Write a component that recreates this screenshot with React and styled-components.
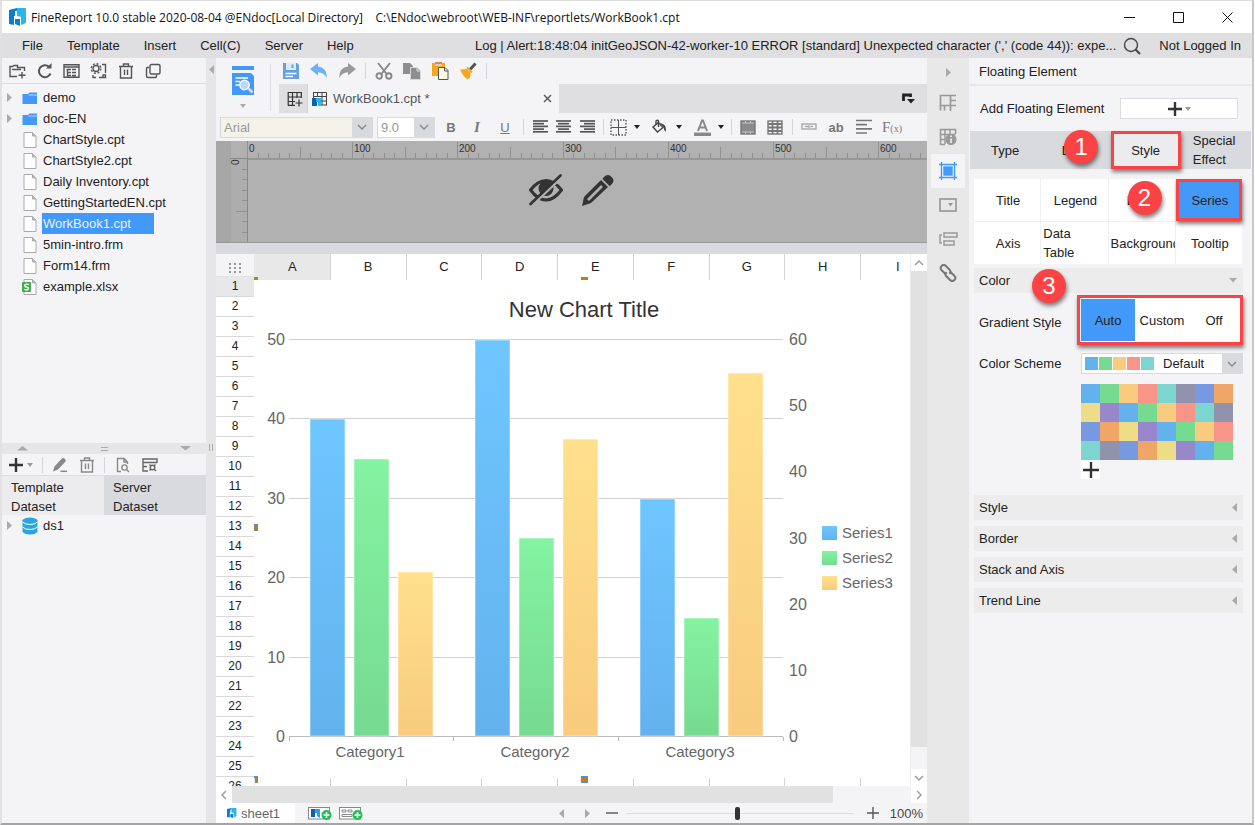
import { useState } from "react";
import styled, { createGlobalStyle, css } from "styled-components";

const GlobalStyle = createGlobalStyle`
  * {
    box-sizing: border-box;
  }
  body {
    margin: 0;
    background: #fff;
    color: #222;
    font-family: "Liberation Sans", Arial, sans-serif;
    font-size: 13px;
  }
  button, select, input {
    font: inherit;
    color: inherit;
    margin: 0;
    padding: 0;
    border: 0;
    background: none;
    border-radius: 0;
  }
  ul {
    list-style: none;
    margin: 0;
    padding: 0;
  }
`;

const Window = styled.div`
  display: flex;
  flex-direction: column;
  height: 100vh;
  min-height: 640px;
  margin-right: 1px;
  border: 1px solid #ddd;
  border-left: 2px solid #e2e2e4;
  border-right: 2px solid #c8c8c8;
  border-bottom: 2px solid #a5a5a5;
  background: #f4f4f7;
  overflow: hidden;
`;

const TitleBar = styled.header`
  display: flex;
  align-items: center;
  flex: none;
  height: 32px;
  padding-left: 7px;
  background: #fff;
  color: #111;
  font-family: "Open Sans", "Noto Sans", sans-serif;
  font-size: 12px;
  white-space: pre;
`;

const Title = styled.span`
  flex: 1;
  margin-left: 4px;
`;

const WindowButton = styled.button`
  display: flex;
  align-items: center;
  justify-content: center;
  width: 49px;
  height: 32px;
`;

const MenuBar = styled.nav`
  display: flex;
  align-items: center;
  flex: none;
  height: 25px;
  padding: 0 11px 0 8px;
  background: #dfdfe1;
  white-space: nowrap;
`;

const MenuItem = styled.button`
  padding: 0 12px;
`;

const LogText = styled.span`
  flex: 1;
  min-width: 0;
  overflow: hidden;
  text-align: right;
`;

const SearchButton = styled.button`
  display: flex;
  margin: 0 18px 0 7px;
`;

const Body = styled.div`
  display: flex;
  flex: 1;
  min-height: 0;
`;

const Sidebar = styled.aside`
  display: flex;
  flex-direction: column;
  flex: none;
  width: 204px;
`;

const SideToolbar = styled.div`
  display: flex;
  align-items: center;
  flex: none;
  height: ${(p) => p.$height}px;
  padding-left: 2px;
  border-bottom: 1px solid #dcdce0;
`;

const IconButton = styled.button`
  display: flex;
  align-items: center;
  justify-content: center;
  gap: ${(p) => p.$gap || 0}px;
  flex: none;
  width: ${(p) => p.$width || 28}px;
  height: 24px;
  color: ${(p) => p.$color || "#555"};
`;

const Separator = styled.span`
  flex: none;
  width: 1px;
  height: 16px;
  margin: 0 ${(p) => p.$space || 4}px;
  background: #d6d6da;
`;

const Tree = styled.ul`
  flex: ${(p) => (p.$grow ? 1 : "none")};
  padding-top: ${(p) => (p.$grow ? 3 : 0)}px;
  min-height: 0;
  overflow: hidden;
`;

const TreeRow = styled.li`
  display: flex;
  align-items: center;
  height: 21px;
  padding-left: 5px;
`;

const TreeArrow = styled.span`
  width: 15px;
  display: flex;
`;

const TreeLabel = styled.span`
  margin-left: 4px;
  padding: 0 23px 0 1px;
  line-height: 21px;
  ${(p) =>
    p.$selected &&
    css`
      background: #4299f9;
      color: #e8f3ff;
    `}
`;

const Splitter = styled.div`
  display: flex;
  align-items: center;
  justify-content: space-between;
  flex: none;
  height: 11px;
  padding: 0 15px;
  background: #e6e6e8;
`;

const DatasetTabs = styled.div`
  display: flex;
  flex: none;
  height: 39px;
`;

const DatasetTab = styled.button`
  flex: 1;
  padding: 2px 40px 0 9px;
  line-height: 19px;
  text-align: left;
  background: ${(p) => (p.$active ? "#ececee" : "#d9dadd")};
`;

const DatasetArea = styled.div`
  flex: none;
  height: 308px;
`;

const SideDivider = styled.div`
  display: flex;
  flex-direction: column;
  justify-content: space-between;
  align-items: center;
  flex: none;
  width: 10px;
  padding: 7px 0 372px;
  background: #e6e6e8;
`;

const Center = styled.main`
  display: flex;
  flex-direction: column;
  flex: 1;
  min-width: 0;
`;

const CenterTop = styled.div`
  display: flex;
  flex: none;
  height: 55px;
`;

const PreviewButton = styled.button`
  display: flex;
  flex-direction: column;
  align-items: center;
  gap: 8px;
  width: 54px;
  padding-top: 7px;
`;

const PreviewLine = styled.span`
  width: 1px;
  margin: 6px 6px 2px 0;
  background: #dcdce0;
`;

const TopColumn = styled.div`
  display: flex;
  flex-direction: column;
  flex: 1;
  min-width: 0;
`;

const Toolbar = styled.div`
  display: flex;
  align-items: center;
  height: 26px;
`;

const FileTabs = styled.div`
  display: flex;
  align-items: stretch;
  height: 29px;
  margin-left: 2px;
  background: #dfdfe1;
`;

const AddTab = styled.button`
  display: flex;
  align-items: center;
  justify-content: center;
  width: 29px;
  padding-left: 4px;
  border-right: 1px solid #d0d0d4;
`;

const FileTab = styled.div`
  display: flex;
  align-items: center;
  gap: 5px;
  width: 251px;
  padding: 0 5px 0 4px;
  background: #f4f4f7;
  color: #555;
  span {
    flex: 1;
  }
`;

const TabMenu = styled.button`
  display: flex;
  align-items: center;
  margin-left: auto;
  margin-right: 12px;
`;

const FormatBar = styled.div`
  display: flex;
  align-items: center;
  flex: none;
  height: 28px;
  padding-left: 4px;
  color: #777;
`;

const Combo = styled.div`
  display: flex;
  width: ${(p) => p.$width}px;
  height: 21px;
  margin-right: 4px;
  border: 1px solid #d9dadd;
  background: ${(p) => p.$bg || "#fff"};
  select {
    appearance: none;
    flex: 1;
    min-width: 0;
    padding-left: 3px;
    color: #999;
    opacity: 1;
  }
`;

const ComboArrow = styled.span`
  display: flex;
  align-items: center;
  justify-content: center;
  width: 20px;
  background: #d9dadd;
  color: #888;
`;

const Glyph = styled.span`
  font-weight: ${(p) => (p.$bold ? 700 : 400)};
  font-style: ${(p) => (p.$italic ? "italic" : "normal")};
  font-family: ${(p) => (p.$serif ? '"Liberation Serif", serif' : "inherit")};
  font-size: ${(p) => (p.$serif ? 15 : 13)}px;
  text-decoration: ${(p) => (p.$underline ? "underline" : "none")};
  small {
    font-size: 10px;
  }
`;

const ParamPane = styled.section`
  position: relative;
  flex: none;
  height: 102px;
  background: #b1b1b1;
  border-bottom: 1px solid #999;
  overflow: hidden;
  & > svg {
    display: block;
  }
`;

const ParamActions = styled.div`
  position: absolute;
  inset: 33px 0 auto 0;
  display: flex;
  justify-content: center;
  gap: 18px;
  button {
    display: flex;
  }
`;

const Sheet = styled.section`
  display: flex;
  flex: 1;
  min-height: 0;
  margin-top: 11px;
  background: #fff;
  box-shadow: 0 -11px 0 #d9dadd;
`;

const RowHeads = styled.div`
  flex: none;
  width: 38px;
  overflow: hidden;
`;

const Corner = styled.div`
  display: flex;
  align-items: center;
  justify-content: center;
  height: 23px;
  padding-top: 6px;
  background: #f4f4f7;
  border-bottom: 1px solid #e4e4e6;
`;

const RowHead = styled.div`
  height: 20px;
  line-height: 19px;
  text-align: center;
  font-size: 12px;
  border-bottom: 1px solid #d9d9dc;
  background: ${(p) => (p.$active ? "#e8e8e8" : "#fff")};
`;

const Canvas = styled.div`
  display: flex;
  flex-direction: column;
  flex: 1;
  min-width: 0;
`;

const ColumnRow = styled.div`
  display: grid;
  grid-template-columns: repeat(8, 1fr) 50px;
  flex: none;
  height: ${(p) => (p.$ticks ? 8 : 23)}px;
  line-height: 26px;
  text-align: center;
`;

const ColumnCell = styled.div`
  border-left: 1px solid #d4d4d8;
  background: ${(p) => (p.$active ? "#e8e8e8" : "none")};
  &:first-child {
    border-left-color: #e8e8e8;
  }
  &:last-child {
    text-align: left;
    padding-left: 35px;
  }
`;

const ChartSvg = styled.svg`
  display: block;
  flex: 1;
  width: 100%;
  min-height: 0;
  overflow: visible;
  text {
    font-family: "Liberation Sans", Arial, sans-serif;
    fill: #666;
  }
`;

const VScroll = styled.div`
  display: flex;
  flex-direction: column;
  flex: none;
  width: 17px;
  background: #f4f4f7;
  border-left: 1px solid #ededf0;
`;

const HScroll = styled.div`
  display: flex;
  flex: none;
  height: 17px;
`;

const ScrollThumb = styled.div`
  flex: ${(p) => p.$share};
  background: #e1e1e1;
`;

const ScrollSpace = styled.div`
  flex: ${(p) => p.$share};
`;

const ScrollButton = styled.button`
  display: flex;
  align-items: center;
  justify-content: center;
  flex: none;
  min-width: 16px;
  height: 17px;
  background: #fff;
  color: #999;
`;

const BottomBar = styled.footer`
  display: flex;
  align-items: center;
  flex: none;
  height: 20px;
  padding-right: 4px;
`;

const SheetTab = styled.button`
  display: flex;
  align-items: center;
  gap: 4px;
  width: 79px;
  height: 20px;
  margin-right: 9px;
  padding-left: 11px;
  background: #fff;
  color: #666;
`;

const SheetNav = styled.div`
  display: flex;
  margin-left: auto;
`;

const Zoom = styled.input`
  appearance: none;
  width: 226px;
  height: 14px;
  margin: 0 12px 0 4px;
  background: linear-gradient(#dcdce0, #dcdce0) center / 100% 1px no-repeat;
  &::-webkit-slider-thumb {
    appearance: none;
    width: 5px;
    height: 13px;
    border-radius: 2px;
    background: #333;
  }
`;

const Percent = styled.span`
  margin-left: 9px;
  color: #444;
`;

const Strip = styled.div`
  flex: none;
  width: 42px;
  padding: 0 4px;
  background: #e8e8e8;
`;

const StripButton = styled.button`
  display: flex;
  align-items: center;
  justify-content: center;
  width: 34px;
  height: ${(p) => p.$height || 34}px;
  color: ${(p) => (p.$active ? "#4299f9" : "#999")};
  background: ${(p) => (p.$active ? "#f4f4f7" : "none")};
`;

const Panel = styled.aside`
  flex: none;
  width: 283px;
`;

const PanelTitle = styled.div`
  height: 28px;
  padding-left: 10px;
  line-height: 27px;
  border-bottom: 2px solid #e8e8ea;
`;

const AddRow = styled.div`
  display: flex;
  align-items: center;
  justify-content: space-between;
  height: 45px;
  padding: 0 14px 0 11px;
`;

const AddButton = styled.button`
  display: flex;
  align-items: center;
  justify-content: center;
  gap: 3px;
  width: 118px;
  height: 21px;
  background: #fff;
  border: 1px solid #dcdce0;
`;

const framed = css`
  border: 3px solid #fb4345;
  box-shadow: 1px 3px 4px rgba(0, 0, 0, 0.5);
  z-index: 1;
`;

const PanelTabs = styled.div`
  display: grid;
  grid-template-columns: repeat(4, 1fr);
  height: 38px;
  margin: 0 1px;
  background: #d9dadd;
`;

const PanelTab = styled.button`
  position: relative;
  line-height: 19px;
  background: ${(p) => (p.$framed ? "#ececee" : "none")};
  text-align: ${(p) => (p.$wrap ? "left" : "center")};
  padding: ${(p) => (p.$wrap ? "0 12px" : "0")};
  ${(p) => p.$framed && framed}
`;

const StyleGrid = styled.div`
  display: grid;
  grid-template-columns: repeat(4, 1fr);
  grid-auto-rows: 42px;
  gap: 1px;
  margin: 10px 10px 4px 5px;
  background: #f0f0f3;
`;

const StyleCell = styled.button`
  position: relative;
  overflow: ${(p) => (p.$clip ? "hidden" : "visible")};
  padding: 0 ${(p) => (p.$wrap ? 20 : 0)}px 0 2px;
  line-height: 19px;
  white-space: ${(p) => (p.$clip ? "nowrap" : "normal")};
  text-align: ${(p) => (p.$clip || p.$wrap ? "left" : "center")};
  background: ${(p) => (p.$framed ? "#4299f9" : "#fff")};
  ${(p) => p.$framed && framed}
`;

const Section = styled.button`
  position: relative;
  display: flex;
  align-items: center;
  justify-content: space-between;
  width: 269px;
  height: 25px;
  margin: 0 0 6px 5px;
  padding: 0 6px 0 5px;
  background: #ececec;
`;

const Field = styled.div`
  display: grid;
  grid-template-columns: ${(p) => p.$label || 102}px 1fr;
  align-items: center;
  margin: 0 9px ${(p) => p.$space || 0}px 10px;
`;

const Segments = styled.div`
  position: relative;
  display: grid;
  grid-template-columns: 54px 54px 1fr;
  height: 50px;
  margin-top: -4px;
  padding: 1px;
  background: #fff;
  ${framed}
`;

const Segment = styled.button`
  background: ${(p) => (p.$active ? "#4299f9" : "#fff")};
`;

const SchemeBox = styled.div`
  display: flex;
  align-items: center;
  height: 21px;
  padding-left: 3px;
  background: #fff;
  border: 1px solid #d9dadd;
  select {
    appearance: none;
    flex: 1;
    min-width: 0;
    padding-left: 8px;
  }
  ${ComboArrow} {
    align-self: stretch;
  }
`;

const SmallSwatch = styled.span`
  width: 13px;
  height: 13px;
  margin-right: 1px;
  background: ${(p) => p.$color};
`;

const Palette = styled.div`
  display: grid;
  grid-template-columns: repeat(8, 19px);
  grid-auto-rows: 19px;
`;

const Swatch = styled.button`
  background: ${(p) => p.$color};
`;

const AddColor = styled.button`
  display: flex;
  align-items: center;
  justify-content: center;
  background: #fff;
`;

const Badge = styled.span`
  position: absolute;
  left: ${(p) => p.$left}px;
  top: ${(p) => p.$top}px;
  z-index: 2;
  width: 34px;
  height: 34px;
  border-radius: 50%;
  background: #fb4345;
  box-shadow: 1px 3px 4px rgba(0, 0, 0, 0.5);
  color: #fff;
  font-size: 24px;
  line-height: 34px;
  text-align: center;
`;

/* ---------- icons ---------- */

const Icon = ({ size = 18, w = size, h = size, children, ...rest }) => (
  <svg width={w} height={h} viewBox={`0 0 ${w} ${h}`} fill="none" stroke="currentColor" strokeWidth="1.4" aria-hidden="true" {...rest}>
    {children}
  </svg>
);

const trianglePaths = {
  right: ["M0 0L5 4.5L0 9Z", 5, 9],
  left: ["M5 0L0 4.5L5 9Z", 5, 9],
  down: ["M0 0H8L4 4.5Z", 8, 5],
  up: ["M0 4.5H8L4 0Z", 8, 5],
};

const Triangle = ({ dir, color = "#aaa", wide }) => {
  const [d, w, h] = trianglePaths[dir];
  return (
    <svg width={wide ? 11 : w} height={h} viewBox={`0 0 ${w} ${h}`} preserveAspectRatio="none" aria-hidden="true">
      <path d={d} fill={color} />
    </svg>
  );
};

const Caret = ({ color = "#222" }) => (
  <svg width="6" height="4" aria-hidden="true"><path d="M0 0H6L3 4Z" fill={color} /></svg>
);

const chevrons = { down: "M2 4L6 8L10 4", up: "M2 8L6 4L10 8", left: "M8 2L4 6L8 10", right: "M4 2L8 6L4 10" };
const Chevron = ({ dir }) => <Icon size={12}><path d={chevrons[dir]} /></Icon>;

const Logo = ({ size = 18 }) => (
  <svg width={size} height={size} viewBox="0 0 18 18" aria-hidden="true">
    <path d="M0 2L8 0V8L11 9V18L6 16V11H5V17L0 16Z" fill="#0c7bd0" />
    <path d="M8 0H16Q17 0 17 1V15L12 17V9L7 8Z" fill="#2bb5e8" />
    <path d="M6 3H8V8L12 9V11H5V8H6Z" fill="#fff" />
  </svg>
);

const Plus = ({ size = 14 }) => (
  <Icon size={size} strokeWidth="2.4" color="#333"><path d={`M${size / 2} 0V${size}M0 ${size / 2}H${size}`} /></Icon>
);

const TrashIcon = () => (
  <Icon size={16}><path d="M1 3.5H15M5.5 3V1H10.500V3M2.500 3.500V15H13.500V3.500M6.500 6.500V12M9.500 6.500V12" /></Icon>
);

const FolderPlus = () => (
  <Icon w={17} h={16}><path d="M15.500 8V4.500H8.500V2.500H5L3.500 3.500H1V13.500H8M3 6.500H12M13 9V15.500M9.500 12.300H16.500" /></Icon>
);

const Refresh = () => (
  <Icon size={16} strokeWidth="2"><path d="M13.500 10.500A6 6 0 1 1 12 3.700" /><path d="M9 5.500H14.500V0Z" fill="currentColor" stroke="none" /></Icon>
);

const PanelTree = () => (
  <Icon w={17} h={16}><path d="M1 1.700H16V14.300H1ZM1 4H16M3.500 6.500H8M4.500 6.500V12.500H8M4.500 9.500H8M9 6.500H13M9 9.500H13M9 12.500H13" /></Icon>
);

const GearFrame = () => (
  <Icon w={17} h={16}>
    <circle cx="6" cy="5.500" r="3" /><circle cx="6" cy="5.500" r="4.800" strokeDasharray="2 1.770" />
    <path d="M12 1.500H15.500V10M13 14.500H9M3 12V14.500H6M15.500 12V14.500H13V12Z" />
  </Icon>
);

const CopyOutline = () => (
  <Icon size={16}><rect x="5" y="1.500" width="10" height="9.500" rx="1.500" /><path d="M4 4.500H2.500Q1.500 4.500 1.500 5.500V13Q1.500 14.500 3 14.500H10.500Q11.500 14.500 11.500 13V12" /></Icon>
);

const FolderIcon = () => (
  <svg width="16" height="14" aria-hidden="true">
    <path d="M0.500 3H6L7.500 1.500H15V13H0.500Z" fill="#4299f9" /><path d="M6.500 4H15" stroke="#b8dbff" />
  </svg>
);

const FileIcon = ({ excel }) => (
  <svg width="16" height="18" aria-hidden="true">
    <path d="M2 1.500H10.500L14 5V16.500H2Z" fill="#fff" stroke="#aaa" /><path d="M10.500 1.500V5H14" fill="#bbb" stroke="#aaa" />
    {excel && (
      <>
        <rect x="0" y="4" width="9" height="10" rx="1" fill="#3aaf4a" />
        <path d="M6.700 7Q6 6 4.500 6.200Q2.500 6.500 2.800 8Q3 9 4.700 9Q6.600 9.300 6.500 10.500Q6 12 4.500 12Q3 12 2.300 11" fill="none" stroke="#fff" strokeWidth="1.300" />
      </>
    )}
  </svg>
);

const Database = () => (
  <svg width="16" height="18" aria-hidden="true">
    <path d="M0.500 3.500V14.500Q2 17.500 8 17.500T15.500 14.500V3.500Z" fill="#2ba5e0" />
    <ellipse cx="8" cy="3.500" rx="7.500" ry="3" fill="#2ba5e0" />
    <path d="M0.500 5Q3 7.500 8 7.500T15.500 5M0.500 10Q3 12.500 8 12.500T15.500 10" stroke="#fff" fill="none" />
  </svg>
);

const PencilSmall = () => (
  <svg width="16" height="16" aria-hidden="true">
    <path d="M1 14.500L2.500 9.500L9.500 2Q11 0.500 12.500 1.500T13.500 4.500L6 12.500Z" fill="#888" /><path d="M8.500 14.300H15" stroke="#888" strokeWidth="1.500" />
  </svg>
);

const DocSearch = () => (
  <Icon size={16}><path d="M6 14.500H2.500V1.500H9L12.500 5V7M9 1.500V5H12.500" /><circle cx="9.500" cy="10.500" r="2.600" /><path d="M11.500 12.500L14 15" /></Icon>
);

const TableGear = () => (
  <Icon size={16}><path d="M15 6V2H1V14H6M1 5.500H15M1 9.500H5" /><circle cx="10.500" cy="10.500" r="2.300" /><path d="M7.500 7.500L9 9M12 12L14 14M13.500 7.500L12 9M7.500 13.500L9 12" /></Icon>
);

const PreviewIcon = () => (
  <svg width="24" height="31" aria-hidden="true">
    <path d="M1 1H23V5H1Z" fill="#4299f9" /><path d="M1 8H20L23 11V30H1Z" fill="#4299f9" />
    <path d="M4.500 13H17M4.500 16.500H9M4.500 20H8" stroke="#fff" strokeWidth="1.500" />
    <circle cx="13.500" cy="20" r="4.700" fill="#b8d9fb" stroke="#fff" strokeWidth="1.500" /><path d="M17.500 23.500L21.500 27.500" stroke="#ddd" strokeWidth="2.500" />
  </svg>
);

const SaveIcon = () => (
  <svg width="18" height="18" aria-hidden="true">
    <path d="M1 1H15L17 3V17H1Z" fill="#65a1dd" /><path d="M4 1H14V8H4Z" fill="#dcebf9" /><path d="M9.500 2.500H11.500V6H9.500Z" fill="#65a1dd" />
    <path d="M3.500 11.500H14.500M3.500 14.500H11" stroke="#fff" strokeWidth="1.300" />
  </svg>
);

const UndoIcon = ({ flip, color }) => (
  <svg width="18" height="16" viewBox="0 0 18 16" aria-hidden="true">
    <path d="M0 6L8 0V3.500Q16.500 4 17 15Q14 9.500 8 9.200V12.500Z" fill={color} transform={flip ? "translate(18 0) scale(-1 1)" : undefined} />
  </svg>
);

const CutIcon = () => (
  <Icon size={18} strokeWidth="1.900" color="#888"><path d="M3 1L12 12.500M15 1L6 12.500" /><circle cx="4.200" cy="14" r="2.700" /><circle cx="13.800" cy="14" r="2.700" /></Icon>
);

const CopyIcon = () => (
  <svg width="18" height="18" aria-hidden="true"><path d="M0 1H7L10 4V12H0Z" fill="#8e8e8e" /><path d="M7.500 5.500H14L17.500 9V17.500H7.500Z" fill="#8e8e8e" stroke="#d8d8d8" /><path d="M14 5.500V9H17.500" stroke="#ddd" fill="none" /></svg>
);

const PasteIcon = () => (
  <svg width="18" height="18" aria-hidden="true"><path d="M1 1H14V14H1Z" fill="#f5a81d" /><path d="M4 0H11V3H4Z" fill="#d98a5a" /><path d="M4 3H11" stroke="#fff" /><path d="M7.500 5.500H14L17 8.500V17.500H7.500Z" fill="#fff8e2" stroke="#555" /><path d="M13.500 5.500V9H17" stroke="#555" fill="none" /></svg>
);

const BrushIcon = () => (
  <svg width="18" height="18" aria-hidden="true"><path d="M16.500 1.500L11 7.500" stroke="#555" strokeWidth="3" /><path d="M1 7.500L8 7L11.500 10.500Q12 16 8.500 17.500Q4.500 15 1 7.500Z" fill="#f5a81d" /><path d="M8 5.500L13 10.500" stroke="#f5a81d" strokeWidth="2" /></svg>
);

const GridAdd = () => (
  <Icon size={16} color="#333"><path d="M1 1.500H14.500M1 6H14.500M1 10.500H8M1.200 1V14.500M5.500 1V14.500M10 1V7M14.300 1V7M1 14.300H8M12 8.500V15.500M8.500 12H15.500" strokeWidth="1.200" /></Icon>
);

const CptIcon = () => (
  <svg width="16" height="16" aria-hidden="true">
    <path d="M1 1.500H14.500V14.500M1.500 1V7M5.500 1V6M10 1V14M1 5.500H14.500M9 10H14.500M9 14H14.500" stroke="#444" fill="none" />
    <path d="M0 7H4V11H5V15H0Z" fill="#0b62ad" /><path d="M4 7H9V15H6V11H4Z" fill="#2bb5e8" />
  </svg>
);

const AlignIcon = ({ kind = "left" }) => {
  const starts = { left: [1, 1], center: [1, 3], right: [1, 5] }[kind];
  return (
    <Icon w={17} h={14} color="#555" strokeWidth="1.700">
      {[1, 3.7, 6.4, 9.1, 11.8].map((y, i) => (
        <path key={y} d={`M${starts[i % 2]} ${y}h${i % 2 ? 11 : 15}`} />
      ))}
    </Icon>
  );
};

const BorderIcon = () => (
  <Icon w={17} h={17} color="#555"><rect x="1" y="1" width="15" height="15" strokeDasharray="1.500 1.500" /><path d="M8.500 1V16M1 8.500H16" strokeWidth="1" /></Icon>
);

const BucketIcon = () => (
  <Icon w={17} h={16} color="#444"><path d="M2 8L7.500 3.500L12 8.500L6.500 13Z" /><path d="M5 6V2Q6.500 0.500 7.500 2V8" /><path d="M9 4Q16 5 15 13Q12.500 11 12.500 8" fill="currentColor" stroke="none" /></Icon>
);

const FontColorIcon = () => (
  <Icon w={17} h={17} color="#888"><path d="M4 12L8 1.500H9L13 12M5.500 8.500H11.500" strokeWidth="2" /><path d="M0 15.300H17" strokeWidth="3.500" /></Icon>
);

const MergeIcon = ({ split }) => (
  <Icon w={16} h={15} color="#777"><rect x="1" y="1" width="14" height="13" fill={split ? "none" : "#8a8a8a"} />{split ? <path d="M1 4H15M1 7.500H15M1 11H15M5.500 1V14M10.500 1V14" strokeWidth="1.800" /> : <path d="M2 3H14M2 12H14M5.500 1V3M10.500 1V3M5.500 12V14M10.500 12V14" stroke="#c4c4c4" strokeWidth="1" />}</Icon>
);

const BoxText = () => (
  <Icon w={16} h={8} color="#aaa"><rect x="1" y="1" width="14" height="5" /><path d="M4 3.500H7M8 2V5M9.500 3.500H12" /></Icon>
);

const LinesIcon = () => (
  <Icon w={18} h={16} color="#777" strokeWidth="1.700"><path d="M1 1.500H17M1 5.700H12M1 9.900H17M1 14H12" /></Icon>
);

const CellAttr = () => (
  <Icon size={18} strokeWidth="1.700"><path d="M1.500 16.500V1.500H17M11.500 1.500V11.500M1.500 11.500H17M5.500 11.500V16.500M11.500 11.500V17M11.500 6.500H17" /></Icon>
);

const CellInfo = () => (
  <Icon size={18} strokeWidth="1.500">
    <path d="M1.500 17V1.500H16.500V6M6 1.500V16M11 1.500V6M1.500 6.500H16.500M1.500 11.500H6M1.500 16.500H6" />
    <circle cx="12" cy="11.500" r="5.500" fill="currentColor" stroke="none" /><path d="M12 7.500V9M12 10.500V15" stroke="#e8e8e8" strokeWidth="1.800" />
  </Icon>
);

const FloatIcon = () => (
  <Icon size={18}><path d="M2.500 0V18M15.500 0V18M0 2.500H18M0 15.500H18" /><rect x="5" y="5" width="8" height="8" fill="currentColor" /></Icon>
);

const WidgetIcon = () => (
  <Icon w={18} h={14} strokeWidth="1.700"><rect x="1" y="1" width="16" height="12" /><path d="M9 5H14L11.500 8.500Z" fill="currentColor" stroke="none" /></Icon>
);

const ConditionIcon = () => (
  <Icon w={19} h={14} strokeWidth="1.500"><rect x="5" y="1" width="13" height="4" /><rect x="5" y="9" width="10" height="4" /><path d="M3 3H1V11H3" /></Icon>
);

const LinkIcon = () => (
  <Icon size={18} strokeWidth="2" color="#777">
    <g transform="rotate(45 9 9)">
      <path d="M8 11.500H2.500Q-0.500 11.500 -0.500 8.500T2.500 5.500H7.500Q10.500 5.500 10.500 8.500" />
      <path d="M10 6.500H15.500Q18.500 6.500 18.500 9.500T15.500 12.500H10.500Q7.500 12.500 7.500 9.500" />
    </g>
  </Icon>
);

const EyeOff = () => (
  <svg width="34" height="32" viewBox="0 0 34 32" aria-hidden="true">
    <path d="M1.500 16Q9 6.500 17 6.500T32.500 16Q25 26 17 26T1.500 16Z" fill="none" stroke="#333" strokeWidth="3" />
    <circle cx="17" cy="14.500" r="7.500" fill="#333" /><path d="M3 31L34 2" stroke="#b1b1b1" strokeWidth="3" /><path d="M1.500 30L31.500 1.500" stroke="#333" strokeWidth="2.600" strokeLinecap="round" />
  </svg>
);

const PencilLarge = () => (
  <svg width="34" height="33" viewBox="0 0 34 33" aria-hidden="true">
    <path d="M1 32L3 23L20 6L27 13L10 29Z" fill="#333" /><path d="M22 4Q26 -1 30 2.500Q35 6 30 11L28.500 12L21.500 5Z" fill="#333" /><path d="M7 26L21 12" stroke="#b1b1b1" strokeWidth="2.600" />
  </svg>
);

const AddSheetIcon = ({ form }) => (
  <svg width="24" height="15" aria-hidden="true">
    <rect x="0.500" y="1.500" width="21" height="11.500" fill="#fff" stroke="#888" />
    {form ? <path d="M3 4H7V6H3ZM9 4H13V6H9ZM3 8.500H13V10.500H3Z" fill="none" stroke="#888" /> : <><path d="M3 3H7V11H3Z" fill="#0b62ad" /><path d="M7 3H12V12L9 10V7H7Z" fill="#2b9fe0" /></>}
    <circle cx="18.500" cy="9" r="5" fill="#20bf55" /><path d="M18.500 6V12M15.500 9H21.500" stroke="#fff" strokeWidth="1.500" />
  </svg>
);

/* ---------- data ---------- */

const menus = ["File", "Template", "Insert", "Cell(C)", "Server", "Help"];

const files = [
  { name: "demo", folder: true },
  { name: "doc-EN", folder: true },
  { name: "ChartStyle.cpt" },
  { name: "ChartStyle2.cpt" },
  { name: "Daily Inventory.cpt" },
  { name: "GettingStartedEN.cpt" },
  { name: "WorkBook1.cpt" },
  { name: "5min-intro.frm" },
  { name: "Form14.frm" },
  { name: "example.xlsx", excel: true },
];

const columns = ["A", "B", "C", "D", "E", "F", "G", "H", "I"];
const rows = Array.from({ length: 26 }, (_, i) => i + 1);

const series = [
  { name: "Series1", top: "#6fc6ff", bottom: "#63b2ee", values: [40, 50, 30], max: 50 },
  { name: "Series2", top: "#84f3a2", bottom: "#76da91", values: [35, 25, 15], max: 50 },
  { name: "Series3", top: "#ffe08c", bottom: "#f8cb7f", values: [25, 45, 55], max: 60 },
];

// x, y, width, height of the resize handles, cut where they meet the headers
const handles = [
  [0, 0, 4, 3],
  [327, 0, 7, 3],
  [0, 247, 4, 7],
  [0, 499, 4, 7],
  [327, 499, 7, 7],
];

const schemeColors = ["#63b2ee", "#76da91", "#f8cb7f", "#f89588", "#7cd6cf", "#9192ab", "#7898e1", "#efa666", "#eddd86", "#9987ce"];
const swatches = Array.from({ length: 32 }, (_, i) => schemeColors[i % schemeColors.length]);

/* ---------- parts ---------- */

function Ruler() {
  const ticks = Array.from({ length: 140 }, (_, i) => i);
  const step = 10.52;
  return (
    <svg width="100%" height="102" aria-hidden="true">
      <rect width="15" height="102" fill="#a7a7a7" />
      <rect x="15" y="18" width="16" height="84" fill="#adadad" />
      <path d="M31.500 0V102M14 17.500H31" stroke="#888" fill="none" />
      <rect x="32" y="17" width="100%" height="2" fill="#979797" />
      {ticks.map((i) => {
        const x = Math.round(31 + i * step) + 0.5;
        const top = i % 10 === 0 ? 1 : i % 5 === 0 ? 6 : 12;
        return <path key={i} d={`M${x} ${top}V17`} stroke="#929292" />;
      })}
      {ticks.filter((i) => i % 10 === 0).map((i) => (
        <text key={i} x={Math.round(33 + i * step)} y="11" fontSize="10" fill="#333" fontFamily="Liberation Sans, sans-serif">
          {i * 10}
        </text>
      ))}
      {[1, 2, 3, 4, 5, 6, 7].map((i) => (
        <path key={i} d={`M${i === 5 ? 20 : 26} ${Math.round(17 + i * step) + 0.5}H31`} stroke="#929292" />
      ))}
      <text x="0" y="0" transform="translate(23 24) rotate(-90)" fontSize="10" fill="#333" fontFamily="Liberation Sans, sans-serif">0</text>
    </svg>
  );
}

function Chart() {
  const base = 460;
  const height = 397;
  const left = [50, 40, 30, 20, 10, 0];
  const right = [60, 50, 40, 30, 20, 10, 0];
  return (
    <ChartSvg role="img" aria-label="New Chart Title">
      <defs>
        {series.map((s) => (
          <linearGradient key={s.name} id={s.name} x2="0" y2="1">
            <stop offset="0" stopColor={s.top} />
            <stop offset="1" stopColor={s.bottom} />
          </linearGradient>
        ))}
      </defs>
      <text x="330" y="40" fontSize="22" textAnchor="middle" style={{ fill: "#333" }}>New Chart Title</text>
      {left.map((v) => {
        const y = Math.round(base - (v / 50) * height);
        return (
          <g key={v}>
            <path d={`M35 ${y - 0.5}H529`} stroke={v ? "#d0d0d0" : "#bbb"} />
            <text x="31" y={y + 5} fontSize="16" textAnchor="end">{v}</text>
          </g>
        );
      })}
      {right.map((v) => (
        <text key={v} x="535" y={Math.round(base - (v / 60) * height) + 5} fontSize="16">{v}</text>
      ))}
      {[35, 199, 364, 529].map((x) => (
        <path key={x} d={`M${x + 0.5} 460V464`} stroke="#bbb" />
      ))}
      {series.map((s, si) =>
        s.values.map((v, ci) => {
          const h = Math.round((v / s.max) * height);
          return <rect key={`${si}-${ci}`} x={56 + ci * 165 + si * 44} y={base - h} width="35" height={h - 1} fill={`url(#${s.name})`} stroke="#fff" strokeOpacity="0.500" />;
        })
      )}
      {[1, 2, 3].map((n) => (
        <text key={n} x={116 + (n - 1) * 165} y="480" fontSize="15" textAnchor="middle">{`Category${n}`}</text>
      ))}
      {series.map((s, i) => (
        <g key={s.name}>
          <rect x="568" y={249 + i * 25} width="15" height="14" fill={`url(#${s.name})`} />
          <text x="588" y={261 + i * 25} fontSize="15">{s.name}</text>
        </g>
      ))}
      {handles.map(([x, y, w, h]) => (
        <g key={`${x},${y}`}>
          <rect x={x} y={y} width={w} height={h} fill="#4f8fe0" />
          <rect x={x ? x + 1 : 0} y={y ? y + 1 : 0} width={x ? w - 2 : w - 1} height={y ? h - 2 : h - 1} fill="#c77a14" />
        </g>
      ))}
    </ChartSvg>
  );
}

function FilePanel() {
  const [selected, setSelected] = useState("WorkBook1.cpt");
  return (
    <Sidebar>
      <SideToolbar $height={26}>
        {[FolderPlus, Refresh, PanelTree, GearFrame, TrashIcon, CopyOutline].map((Item, i) => (
          <IconButton key={i} $width={27}><Item /></IconButton>
        ))}
      </SideToolbar>
      <Tree $grow>
        {files.map((file) => (
          <TreeRow key={file.name} onClick={() => setSelected(file.name)}>
            <TreeArrow>{file.folder && <Triangle dir="right" />}</TreeArrow>
            {file.folder ? <FolderIcon /> : <FileIcon excel={file.excel} />}
            <TreeLabel $selected={file.name === selected}>{file.name}</TreeLabel>
          </TreeRow>
        ))}
      </Tree>
      <Splitter>
        <Triangle dir="up" wide />
        <Icon w={7} h={4} color="#aaa" strokeWidth="1"><path d="M0 0.500H7M0 3.500H7" /></Icon>
        <Triangle dir="down" wide />
      </Splitter>
      <SideToolbar $height={22}>
        <IconButton $width={34} $gap={4}><Plus /><Caret color="#999" /></IconButton>
        <Separator />
        <IconButton $width={26}><PencilSmall /></IconButton>
        <IconButton $width={27} $color="#888"><TrashIcon /></IconButton>
        <Separator />
        <IconButton $width={27} $color="#888"><DocSearch /></IconButton>
        <IconButton $width={27} $color="#666"><TableGear /></IconButton>
      </SideToolbar>
      <DatasetTabs>
        <DatasetTab $active>Template Dataset</DatasetTab>
        <DatasetTab>Server Dataset</DatasetTab>
      </DatasetTabs>
      <DatasetArea>
        <Tree>
          <TreeRow>
            <TreeArrow><Triangle dir="right" /></TreeArrow>
            <Database />
            <TreeLabel>ds1</TreeLabel>
          </TreeRow>
        </Tree>
      </DatasetArea>
    </Sidebar>
  );
}

function Editor() {
  return (
    <Center>
      <CenterTop>
        <PreviewButton aria-label="Preview"><PreviewIcon /><Caret color="#aaa" /></PreviewButton>
        <PreviewLine />
        <TopColumn>
          <Toolbar>
            <IconButton><SaveIcon /></IconButton>
            <IconButton><UndoIcon color="#6fb0f2" /></IconButton>
            <IconButton><UndoIcon color="#999" flip /></IconButton>
            <Separator />
            <IconButton><CutIcon /></IconButton>
            <IconButton><CopyIcon /></IconButton>
            <IconButton><PasteIcon /></IconButton>
            <IconButton><BrushIcon /></IconButton>
            <Separator />
          </Toolbar>
          <FileTabs>
            <AddTab aria-label="New sheet"><GridAdd /></AddTab>
            <FileTab>
              <CptIcon />
              <span>WorkBook1.cpt *</span>
              <IconButton $width={14} aria-label="Close"><Icon size={9}><path d="M1 1L8 8M8 1L1 8" /></Icon></IconButton>
            </FileTab>
            <TabMenu aria-label="Tab list">
              <svg width="13" height="11"><path d="M1.500 8V2H8.500V4" stroke="#222" strokeWidth="2.800" fill="none" /><path d="M5 6H13L9 10.500Z" fill="#222" /></svg>
            </TabMenu>
          </FileTabs>
        </TopColumn>
      </CenterTop>
      <FormatBar>
        <Combo $width={153} $bg="#f3f3ea">
          <select aria-label="Font" disabled><option>Arial</option></select>
          <ComboArrow><Chevron dir="down" /></ComboArrow>
        </Combo>
        <Combo $width={58}>
          <select aria-label="Font size" disabled><option>9.0</option></select>
          <ComboArrow><Chevron dir="down" /></ComboArrow>
        </Combo>
        <IconButton $width={24} $color="#777"><Glyph $bold>B</Glyph></IconButton>
        <IconButton $color="#777"><Glyph $italic $serif $bold>I</Glyph></IconButton>
        <IconButton $color="#777"><Glyph $underline>U</Glyph></IconButton>
        <Separator />
        <IconButton $width={24}><AlignIcon /></IconButton>
        <IconButton $width={23}><AlignIcon kind="center" /></IconButton>
        <IconButton $width={24}><AlignIcon kind="right" /></IconButton>
        <Separator />
        <IconButton $width={34} $gap={7}><BorderIcon /><Caret /></IconButton>
        <IconButton $width={48} $gap={8}><BucketIcon /><Caret /></IconButton>
        <IconButton $width={38} $gap={7}><FontColorIcon /><Caret /></IconButton>
        <Separator $space={3} />
        <IconButton $width={26}><MergeIcon /></IconButton>
        <IconButton><MergeIcon split /></IconButton>
        <Separator $space={3} />
        <IconButton $width={26}><BoxText /></IconButton>
        <IconButton $color="#777"><Glyph $bold>ab</Glyph></IconButton>
        <IconButton><LinesIcon /></IconButton>
        <IconButton $color="#777"><Glyph $serif>F<small>(x)</small></Glyph></IconButton>
      </FormatBar>
      <ParamPane>
        <Ruler />
        <ParamActions>
          <button aria-label="Hide"><EyeOff /></button>
          <button aria-label="Edit"><PencilLarge /></button>
        </ParamActions>
      </ParamPane>
      <Sheet>
        <RowHeads>
          <Corner>
            <svg width="12" height="10">
              {[0, 4, 8].map((y) => <path key={y} d={`M0 ${y + 1}H12`} stroke="#999" strokeWidth="2" strokeDasharray="2 3" />)}
            </svg>
          </Corner>
          {rows.map((n) => <RowHead key={n} $active={n === 1}>{n}</RowHead>)}
        </RowHeads>
        <Canvas>
          <ColumnRow>
            {columns.map((c) => <ColumnCell key={c} $active={c === "A"}>{c}</ColumnCell>)}
          </ColumnRow>
          <Chart />
          <ColumnRow $ticks>
            {columns.map((c) => <ColumnCell key={c} />)}
          </ColumnRow>
        </Canvas>
        <VScroll>
          <ScrollButton><Chevron dir="up" /></ScrollButton>
          <ScrollThumb $share={477} />
          <ScrollSpace $share={22} />
          <ScrollButton><Chevron dir="down" /></ScrollButton>
        </VScroll>
      </Sheet>
      <HScroll>
        <ScrollButton><Chevron dir="left" /></ScrollButton>
        <ScrollThumb $share={600} />
        <ScrollSpace $share={78} />
        <ScrollButton><Chevron dir="right" /></ScrollButton>
      </HScroll>
      <BottomBar>
        <SheetTab><Logo size={10} />sheet1</SheetTab>
        <IconButton $width={31}><AddSheetIcon /></IconButton>
        <IconButton $width={31}><AddSheetIcon form /></IconButton>
        <SheetNav>
          <IconButton $width={26}><Triangle dir="left" /></IconButton>
          <IconButton $width={26}><Triangle dir="right" /></IconButton>
        </SheetNav>
        <IconButton $width={22}><Icon size={12}><path d="M0 6H12" /></Icon></IconButton>
        <Zoom type="range" aria-label="Zoom" min="0" max="200" defaultValue="98" />
        <IconButton $width={16}><Icon size={12}><path d="M0 6H12M6 0V12" /></Icon></IconButton>
        <Percent>100%</Percent>
      </BottomBar>
    </Center>
  );
}

function PropertyPanel() {
  const [gradient, setGradient] = useState("Auto");
  return (
    <Panel>
      <PanelTitle>Floating Element</PanelTitle>
      <AddRow>
        Add Floating Element
        <AddButton aria-label="Add floating element"><Plus /><Caret color="#999" /></AddButton>
      </AddRow>
      <PanelTabs>
        <PanelTab>Type</PanelTab>
        <PanelTab>Data<Badge $left={24} $top={-1}>1</Badge></PanelTab>
        <PanelTab $framed>Style</PanelTab>
        <PanelTab $wrap>Special Effect</PanelTab>
      </PanelTabs>
      <StyleGrid>
        <StyleCell>Title</StyleCell>
        <StyleCell>Legend</StyleCell>
        <StyleCell>Label<Badge $left={19} $top={2}>2</Badge></StyleCell>
        <StyleCell $framed>Series</StyleCell>
        <StyleCell>Axis</StyleCell>
        <StyleCell $wrap>Data Table</StyleCell>
        <StyleCell $clip>Background</StyleCell>
        <StyleCell>Tooltip</StyleCell>
      </StyleGrid>
      <Section>
        Color
        <Triangle dir="down" />
        <Badge $left={58} $top={1}>3</Badge>
      </Section>
      <Field $label={98} $space={8}>
        <span>Gradient Style</span>
        <Segments role="group" aria-label="Gradient Style">
          {["Auto", "Custom", "Off"].map((name) => (
            <Segment key={name} $active={name === gradient} onClick={() => setGradient(name)}>{name}</Segment>
          ))}
        </Segments>
      </Field>
      <Field $space={10}>
        <label htmlFor="scheme">Color Scheme</label>
        <SchemeBox>
          {schemeColors.slice(0, 5).map((c) => <SmallSwatch key={c} $color={c} />)}
          <select id="scheme"><option>Default</option></select>
          <ComboArrow><Chevron dir="down" /></ComboArrow>
        </SchemeBox>
      </Field>
      <Field $space={16}>
        <span />
        <Palette>
          {swatches.map((c, i) => <Swatch key={i} $color={c} aria-label={c} />)}
          <AddColor aria-label="Add color"><Plus size={16} /></AddColor>
        </Palette>
      </Field>
      {["Style", "Border", "Stack and Axis", "Trend Line"].map((name) => (
        <Section key={name}>{name}<Triangle dir="left" /></Section>
      ))}
    </Panel>
  );
}

export default function App() {
  return (
    <>
      <GlobalStyle />
      <Window>
        <TitleBar>
          <Logo />
          <Title>{"FineReport 10.0 stable 2020-08-04 @ENdoc[Local Directory]    C:\\ENdoc\\webroot\\WEB-INF\\reportlets/WorkBook1.cpt"}</Title>
          <WindowButton aria-label="Minimize"><Icon size={11} strokeWidth="1"><path d="M0 5.500H11" /></Icon></WindowButton>
          <WindowButton aria-label="Maximize"><Icon size={11} strokeWidth="1"><path d="M0.500 0.500H10.500V10.500H0.500Z" /></Icon></WindowButton>
          <WindowButton aria-label="Close"><Icon size={11} strokeWidth="1"><path d="M0.500 0.500L10.500 10.500M10.500 0.500L0.500 10.500" /></Icon></WindowButton>
        </TitleBar>
        <MenuBar>
          {menus.map((m) => <MenuItem key={m}>{m}</MenuItem>)}
          <LogText>Log | Alert:18:48:04 initGeoJSON-42-worker-10 ERROR [standard] Unexpected character (',' (code 44)): expe...</LogText>
          <SearchButton aria-label="Search"><Icon size={18} color="#444"><circle cx="8" cy="8" r="6.500" /><path d="M12.500 12.500L17 17" strokeWidth="2" /></Icon></SearchButton>
          <button>Not Logged In</button>
        </MenuBar>
        <Body>
          <FilePanel />
          <SideDivider>
            <Triangle dir="left" />
            <Icon w={4} h={7} color="#aaa" strokeWidth="1"><path d="M0.500 0V7M3.500 0V7" /></Icon>
          </SideDivider>
          <Editor />
          <Strip>
            <StripButton $height={28}><Triangle dir="right" /></StripButton>
            <StripButton><CellAttr /></StripButton>
            <StripButton><CellInfo /></StripButton>
            <StripButton $active><FloatIcon /></StripButton>
            <StripButton><WidgetIcon /></StripButton>
            <StripButton><ConditionIcon /></StripButton>
            <StripButton><LinkIcon /></StripButton>
          </Strip>
          <PropertyPanel />
        </Body>
      </Window>
    </>
  );
}
